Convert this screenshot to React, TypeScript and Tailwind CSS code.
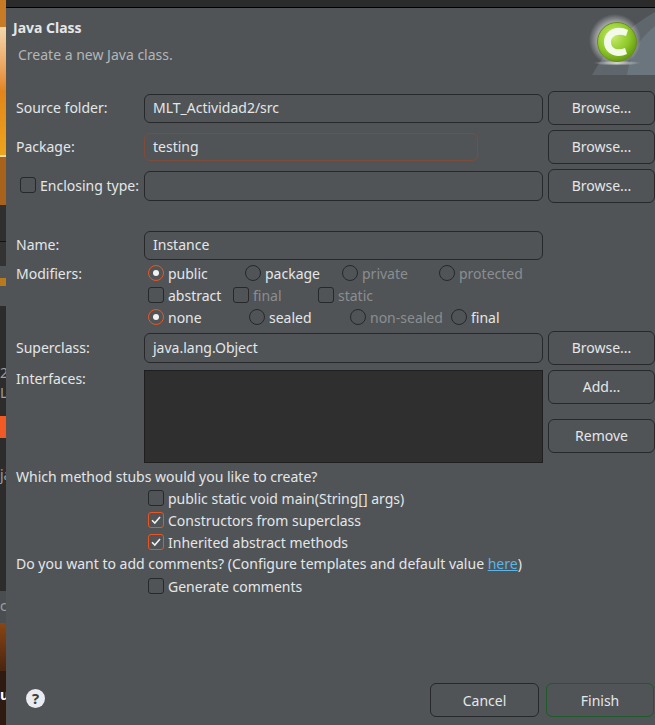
const font = { fontFamily: '"Noto Sans", sans-serif' };

function Check({ checked = false }: { checked?: boolean }) {
  return (
    <span className={`flex h-[16px] w-[16px] shrink-0 items-center justify-center rounded-[3px] border ${checked ? "border-[#e95420]" : "border-[#26282a]"}`}>
      {checked && (
        <svg width="12" height="12" viewBox="0 0 12 12" fill="none">
          <path d="M2 6.2 L4.8 9 L10 3" stroke="#f2f2f2" strokeWidth="1.6" />
        </svg>
      )}
    </span>
  );
}

function Radio({ checked = false }: { checked?: boolean }) {
  return (
    <span className={`flex h-[16px] w-[16px] shrink-0 items-center justify-center rounded-full border ${checked ? "border-[#e95420]" : "border-[#26282a]"}`}>
      {checked && <span className="h-[6px] w-[6px] rounded-full bg-[#f2f2f2]" />}
    </span>
  );
}

function Button({ label, extra = "border-[#26282a] pb-[2px]" }: { label: string; extra?: string }) {
  return <div className={`flex h-[34px] w-full items-center justify-center rounded-[6px] border text-[#e4e6e8] ${extra}`}>{label}</div>;
}

function Input({ value = "", w = "w-[399px]", border = "border-[#26282a]", h = "h-[29px]" }: { value?: string; w?: string; border?: string; h?: string }) {
  return <div className={`flex items-center rounded-[6px] border pb-[2px] pl-[8px] text-[#e4e6e8] ${w} ${h} ${border}`}>{value}</div>;
}

function Row({ label, input, button, rowClass }: { label: React.ReactNode; input: React.ReactNode; button?: string; rowClass: string }) {
  return (
    <div className={`flex items-center ${rowClass}`}>
      <div className="w-[138px] shrink-0 pb-[2px] pl-[10px]">{label}</div>
      {input}
      <div className="ml-auto w-[107px]">{button && <Button label={button} />}</div>
    </div>
  );
}

function Opt({ kind, label, on, off, w }: { kind: "r" | "c"; label: string; on?: boolean; off?: boolean; w: string }) {
  return (
    <div className={`flex items-center gap-[4px] ${w}`}>
      {kind === "r" ? <Radio checked={on} /> : <Check checked={on} />}
      <span className={off ? "text-[#8b8e90]" : "text-[#e4e6e8]"}>{label}</span>
    </div>
  );
}

function Sliver({ text, h, bg, color = "text-[#9aa0a4]" }: { text: string; h: string; bg: string; color?: string }) {
  return <div className={`overflow-hidden whitespace-nowrap text-[14px] leading-none ${h} ${bg} ${color}`}>{text}</div>;
}

export default function App() {
  return (
    <div className="flex h-[725px] w-[655px] flex-col overflow-hidden bg-[#505457] text-[14px] text-[#e4e6e8]" style={font}>
      <div className="flex flex-1">
        <div className="flex w-[6px] shrink-0 flex-col">
          <div className="h-[27px] shrink-0 bg-[#c97a25]" />
          <div className="h-[128px] shrink-0 bg-gradient-to-b from-[#f3d8ac] via-[#e2851a] to-[#eda51b]" />
          <div className="h-[2px] shrink-0 bg-[#f3d9a8]" />
          <div className="h-[48px] shrink-0 bg-[#a8621c]" />
          <div className="h-[36px] shrink-0 bg-[#2f2f2f]" />
          <div className="h-[1px] shrink-0 bg-[#111111]" />
          <div className="h-[24px] shrink-0 bg-[#333333]" />
          <div className="h-[12px] shrink-0 bg-[#505457]" />
          <div className="h-[8px] shrink-0 bg-[#b87a1c]" />
          <div className="h-[20px] shrink-0 bg-[#505457]" />
          <div className="h-[60px] shrink-0 bg-[#2c2c2c]" />
          <Sliver text="2" h="h-[20px] shrink-0" bg="bg-[#2c2c2c]" />
          <Sliver text="Li" h="h-[30px] shrink-0" bg="bg-[#2c2c2c]" />
          <div className="h-[22px] shrink-0 bg-[#f15a24]" />
          <div className="h-[30px] shrink-0 bg-[#2c2c2c]" />
          <Sliver text="ja" h="h-[123px] shrink-0" bg="bg-[#2c2c2c]" />
          <div className="h-[8px] shrink-0 bg-[#4a4e50]" />
          <Sliver text="c" h="h-[24px] shrink-0" bg="bg-[#4a4e50]" />
          <div className="h-[48px] shrink-0 bg-gradient-to-b from-[#8a4513] to-[#4a2510]" />
          <div className="h-[17px] shrink-0 bg-[#2e1a10]" />
          <Sliver text="u" h="h-[20px] shrink-0 font-bold" bg="bg-[#2e1a10]" color="text-white" />
          <div className="flex-1 bg-[#2e1a10]" />
        </div>
        <div className="flex min-w-0 flex-1 flex-col">
          <div className="h-[8px] shrink-0 border-b border-black bg-[#2b2b2b]" />
          <div className="relative flex h-[83px] shrink-0 flex-col">
            <div className="pl-[7px] pt-[10px] font-bold leading-[20px]">Java Class</div>
            <div className="pl-[12px] pt-[7px] leading-[20px] text-[#b3b6b8]">Create a new Java class.</div>
            <svg className="absolute right-0 top-[2px]" width="66" height="65" viewBox="0 0 66 65">
              <defs>
                <radialGradient id="g" cx="0.4" cy="0.35" r="0.7">
                  <stop offset="0" stopColor="#c8ec70" />
                  <stop offset="0.6" stopColor="#8dc828" />
                  <stop offset="1" stopColor="#5e9410" />
                </radialGradient>
                <radialGradient id="glow" cx="0.5" cy="0.5" r="0.5">
                  <stop offset="0.7" stopColor="#ffffff" stopOpacity="0.45" />
                  <stop offset="1" stopColor="#ffffff" stopOpacity="0" />
                </radialGradient>
                <linearGradient id="shadow" x1="0" x2="1" y1="0" y2="0">
                  <stop offset="0" stopColor="#d8dad4" stopOpacity="0" />
                  <stop offset="0.5" stopColor="#d8dad4" stopOpacity="0.9" />
                  <stop offset="1" stopColor="#d8dad4" stopOpacity="0" />
                </linearGradient>
              </defs>
              <path d="M3 65 Q 25 25 66 2 L66 65 Z" fill="#5f676d" />
              <path d="M38 65 Q 42 35 66 16 L66 65 Z" fill="#6b757d" />
              <circle cx="26" cy="30" r="26" fill="url(#glow)" />
              <ellipse cx="28" cy="53" rx="24" ry="1.6" fill="url(#shadow)" />
              <circle cx="28" cy="32" r="19.5" fill="url(#g)" stroke="#6d8a20" />
              <path d="M39 20 C28 14 15 20 15 32 C15 44 28 49 38 44 L36 38 C29 41 22 39 22 32 C22 26 29 23 37 26 Z" fill="#f4faea" />
            </svg>
          </div>
          <div className="flex flex-1 flex-col">
            <Row rowClass="h-[34px]" label="Source folder:" input={<Input value="MLT_Actividad2/src" />} button="Browse..." />
            <Row rowClass="mt-[5px] h-[34px]" label="Package:" input={<Input value="testing" w="w-[334px]" border="border-[#7d4d3c]" h="h-[28px]" />} button="Browse..." />
            <Row
              rowClass="mt-[5px] h-[34px]"
              label={
                <div className="-mr-[4px] flex items-center gap-[4px] pl-[4px]">
                  <Check />
                  <span>Enclosing type:</span>
                </div>
              }
              input={<Input h="h-[30px]" />}
              button="Browse..."
            />
            <Row rowClass="mt-[27px] h-[30px]" label="Name:" input={<Input value="Instance" />} />
            <div className="mt-[2px] flex">
              <div className="w-[138px] pl-[10px] pt-[1px] leading-[22px]">Modifiers:</div>
              <div className="flex flex-col pl-[4px]">
                <div className="flex h-[22px] items-center">
                  <Opt kind="r" label="public" on w="w-[97px]" />
                  <Opt kind="r" label="package" w="w-[97px]" />
                  <Opt kind="r" label="private" off w="w-[97px]" />
                  <Opt kind="r" label="protected" off w="w-[97px]" />
                </div>
                <div className="flex h-[22px] items-center">
                  <Opt kind="c" label="abstract" w="w-[85px]" />
                  <Opt kind="c" label="final" off w="w-[85px]" />
                  <Opt kind="c" label="static" off w="w-[85px]" />
                </div>
                <div className="flex h-[22px] items-center">
                  <Opt kind="r" label="none" on w="w-[101px]" />
                  <Opt kind="r" label="sealed" w="w-[101px]" />
                  <Opt kind="r" label="non-sealed" off w="w-[101px]" />
                  <Opt kind="r" label="final" w="w-[60px]" />
                </div>
              </div>
            </div>
            <Row rowClass="mt-[3px] h-[34px]" label="Superclass:" input={<Input value="java.lang.Object" h="h-[30px]" />} button="Browse..." />
            <div className="mt-[5px] flex h-[93px]">
              <div className="w-[138px] shrink-0 pl-[10px] leading-[18px]">Interfaces:</div>
              <div className="h-full w-[399px] border border-[#1f1f1f] bg-[#2f2f2f]" />
              <div className="ml-auto flex w-[107px] flex-col gap-[15px]">
                <Button label="Add..." />
                <Button label="Remove" />
              </div>
            </div>
            <div className="mt-[3px] pl-[10px] leading-[21px]">Which method stubs would you like to create?</div>
            <div className="flex flex-col pl-[142px]">
              <Opt kind="c" label="public static void main(String[] args)" w="h-[22px]" />
              <Opt kind="c" label="Constructors from superclass" on w="h-[22px]" />
              <Opt kind="c" label="Inherited abstract methods" on w="h-[22px]" />
            </div>
            <div className="pl-[10px] leading-[22px]">
              Do you want to add comments? (Configure templates and default value <span className="text-[#5fb4e6] underline">here</span>)
            </div>
            <div className="pl-[142px]"><Opt kind="c" label="Generate comments" w="h-[22px]" /></div>
            <div className="mt-auto flex items-center pb-[8px] pr-[1px]">
              <div className="mb-[3px] ml-[20px] flex h-[19px] w-[19px] items-center justify-center rounded-full bg-[#e9ebf0] text-[15px] font-bold leading-none text-[#3a3f44]">?</div>
              <div className="ml-auto flex gap-[7px]">
                <div className="w-[109px]"><Button label="Cancel" extra="border-[#26282a]" /></div>
                <div className="w-[108px]"><Button label="Finish" extra="border-[#1e5a2a]" /></div>
              </div>
            </div>
          </div>
        </div>
      </div>
    </div>
  );
}
